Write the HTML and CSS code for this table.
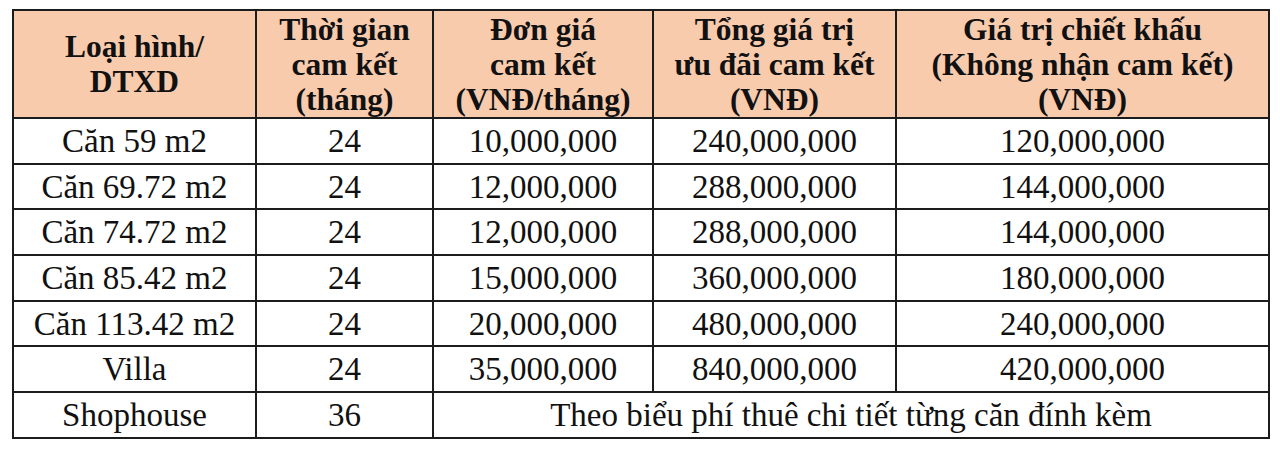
FILE: index.html
```html
<!DOCTYPE html>
<html lang="vi">
<head>
<meta charset="utf-8">
<title>Bảng giá cam kết</title>
<link rel="stylesheet" href="styles.css">
</head>
<body>
<table class="price-table">
  <colgroup>
    <col class="c1"><col class="c2"><col class="c3"><col class="c4"><col class="c5">
  </colgroup>
  <thead>
    <tr class="head-row">
      <th>Loại hình/<br>DTXD</th>
      <th>Thời gian<br>cam kết<br>(tháng)</th>
      <th>Đơn giá<br>cam kết<br>(VNĐ/tháng)</th>
      <th>Tổng giá trị<br>ưu đãi cam kết<br>(VNĐ)</th>
      <th>Giá trị chiết khấu<br>(Không nhận cam kết)<br>(VNĐ)</th>
    </tr>
  </thead>
  <tbody>
    <tr><td>Căn 59 m2</td><td>24</td><td>10,000,000</td><td>240,000,000</td><td>120,000,000</td></tr>
    <tr><td>Căn 69.72 m2</td><td>24</td><td>12,000,000</td><td>288,000,000</td><td>144,000,000</td></tr>
    <tr><td>Căn 74.72 m2</td><td>24</td><td>12,000,000</td><td>288,000,000</td><td>144,000,000</td></tr>
    <tr><td>Căn 85.42 m2</td><td>24</td><td>15,000,000</td><td>360,000,000</td><td>180,000,000</td></tr>
    <tr><td>Căn 113.42 m2</td><td>24</td><td>20,000,000</td><td>480,000,000</td><td>240,000,000</td></tr>
    <tr><td>Villa</td><td>24</td><td>35,000,000</td><td>840,000,000</td><td>420,000,000</td></tr>
    <tr><td>Shophouse</td><td>36</td><td colspan="3">Theo biểu phí thuê chi tiết từng căn đính kèm</td></tr>
  </tbody>
</table>
</body>
</html>
```
FILE: styles.css
```css
html, body {
  background: #ffffff;
}
body {
  margin: 0;
  padding: 9px 0 0 12px;
  font-family: "Liberation Serif", "Times New Roman", serif;
  color: #111111;
}
.price-table {
  border-collapse: collapse;
  table-layout: fixed;
  width: 1256px;
}
.c1 { width: 243px; }
.c2 { width: 177px; }
.c3 { width: 220px; }
.c4 { width: 243px; }
.c5 { width: 373px; }
.price-table th,
.price-table td {
  border: 2px solid #1c1c1c;
  text-align: center;
  vertical-align: middle;
  padding: 0;
}
.price-table th {
  background: #f8cbad;
  font-weight: bold;
  font-size: 31.5px;
  line-height: 35px;
  height: 106px;
}
.price-table td {
  font-size: 33px;
  line-height: 36px;
  height: 43.7px;
}
```
